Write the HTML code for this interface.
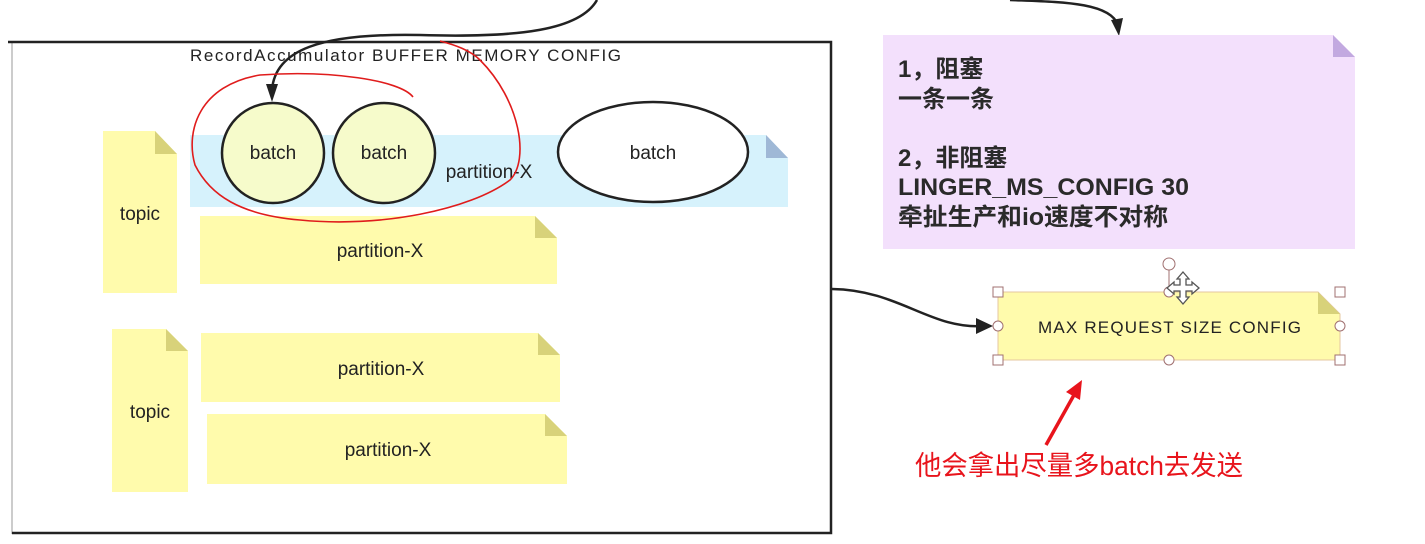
<!DOCTYPE html>
<html><head><meta charset="utf-8"><style>
html,body{margin:0;padding:0;background:#fff;width:1425px;height:544px;overflow:hidden}
svg{display:block}
.t{font-family:"Liberation Sans","Noto Sans CJK SC",sans-serif;fill:#222}
</style></head><body>
<svg width="1425" height="544" viewBox="0 0 1425 544" xmlns="http://www.w3.org/2000/svg">
<line x1="12" y1="42" x2="12" y2="534" stroke="#999" stroke-width="1"/>
<path d="M8 42 H831 V533 H12" fill="none" stroke="#222" stroke-width="2.5"/>
<text x="190" y="61" class="t" font-size="17" fill="#333" textLength="431" lengthAdjust="spacing">RecordAccumulator  BUFFER  MEMORY  CONFIG</text>
<path d="M190 135 H766 L788 158 V207 H190 Z" fill="#d6f2fc"/>
<path d="M766 135 L788 158 H766 Z" fill="#9fb8d6"/>
<g fill="#fffbac">
<path d="M103 131 H155 L177 154 V293 H103 Z"/>
<path d="M200 216 H535 L557 238 V284 H200 Z"/>
<path d="M112 329 H166 L188 351 V492 H112 Z"/>
<path d="M201 333 H538 L560 355 V402 H201 Z"/>
<path d="M207 414 H545 L567 436 V484 H207 Z"/>
</g>
<g fill="#d8d27a">
<path d="M155 131 L177 154 H155 Z"/>
<path d="M535 216 L557 238 H535 Z"/>
<path d="M166 329 L188 351 H166 Z"/>
<path d="M538 333 L560 355 H538 Z"/>
<path d="M545 414 L567 436 H545 Z"/>
</g>
<g class="t" font-size="19" text-anchor="middle">
<text x="140" y="220">topic</text>
<text x="150" y="418">topic</text>
<text x="380" y="257">partition-X</text>
<text x="381" y="375">partition-X</text>
<text x="388" y="456">partition-X</text>
<text x="489" y="178">partition-X</text>
</g>
<ellipse cx="273" cy="153" rx="51" ry="50" fill="#f6fbcb" stroke="#222" stroke-width="2.5"/>
<ellipse cx="384" cy="153" rx="51" ry="50" fill="#f6fbcb" stroke="#222" stroke-width="2.5"/>
<ellipse cx="653" cy="152" rx="95" ry="50" fill="#fff" stroke="#222" stroke-width="2.5"/>
<g class="t" font-size="19" text-anchor="middle">
<text x="273" y="159">batch</text>
<text x="384" y="159">batch</text>
<text x="653" y="159">batch</text>
</g>
<path d="M597 0 C580 30 520 38 420 35 C320 33 275 50 272 90" fill="none" stroke="#222" stroke-width="2.5"/>
<path d="M266 84 L272 102 L278 84 Z" fill="#222"/>
<path d="M1010 0 C1060 2 1110 2 1118 25" fill="none" stroke="#222" stroke-width="2.5"/>
<path d="M1111 20 L1119 36 L1123 18 Z" fill="#222"/>
<path d="M413 97 C400 80 330 70 260 75 C200 85 185 130 195 165 C210 195 240 215 300 220 C380 228 470 210 510 180 C530 160 520 100 480 60 C470 50 455 45 440 41" fill="none" stroke="#e01c1c" stroke-width="1.6"/>
<path d="M883 35 H1333 L1355 57 V249 H883 Z" fill="#f3e0fc"/>
<path d="M1333 35 L1355 57 H1333 Z" fill="#c2a9e0"/>
<g font-family="Liberation Sans,'Noto Sans CJK SC',sans-serif" font-weight="bold" font-size="24" fill="#2a2a2a">
<text x="898" y="77">1，阻塞</text>
<text x="898" y="107">一条一条</text>
<text x="898" y="166">2，非阻塞</text>
<text x="898" y="195" textLength="291" lengthAdjust="spacingAndGlyphs">LINGER_MS_CONFIG 30</text>
<text x="898" y="225" textLength="270" lengthAdjust="spacingAndGlyphs">牵扯生产和io速度不对称</text>
</g>
<path d="M832 289 C900 290 930 330 985 326" fill="none" stroke="#222" stroke-width="2.5"/>
<path d="M976 318 L993 326 L976 334 Z" fill="#222"/>
<path d="M998 292 H1318 L1340 314 V360 H998 Z" fill="#fffbac" stroke="#e4c7a0" stroke-width="1"/>
<path d="M1318 292 L1340 314 H1318 Z" fill="#d8d27a"/>
<text x="1038" y="333" class="t" font-size="17" fill="#333" textLength="263" lengthAdjust="spacing">MAX  REQUEST  SIZE  CONFIG</text>
<g fill="#fff" stroke="#a07070" stroke-width="1">
<line x1="1169" y1="270" x2="1169" y2="292"/>
<circle cx="1169" cy="264" r="6"/>
<rect x="993" y="287" width="10" height="10"/><rect x="1335" y="287" width="10" height="10"/>
<rect x="993" y="355" width="10" height="10"/><rect x="1335" y="355" width="10" height="10"/>
<circle cx="998" cy="326" r="5"/><circle cx="1340" cy="326" r="5"/>
<circle cx="1169" cy="292" r="5"/><circle cx="1169" cy="360" r="5"/>
</g>
<g stroke="#555" stroke-width="1.3" fill="#fff">
<path d="M1183 272 L1189 279 H1186 V285 H1192 V282 L1199 288 L1192 294 V291 H1186 V297 H1189 L1183 304 L1177 297 H1180 V291 H1174 V294 L1167 288 L1174 282 V285 H1180 V279 H1177 Z"/>
</g>
<line x1="1046" y1="445" x2="1074" y2="395" stroke="#e8141c" stroke-width="3.5"/>
<path d="M1066 392 L1082 380 L1080 400 Z" fill="#e8141c"/>
<text x="915" y="475" font-family="Liberation Sans,'Noto Sans CJK SC',sans-serif" font-size="27" fill="#e8141c" textLength="328" lengthAdjust="spacingAndGlyphs">他会拿出尽量多batch去发送</text>
</svg>
</body></html>
